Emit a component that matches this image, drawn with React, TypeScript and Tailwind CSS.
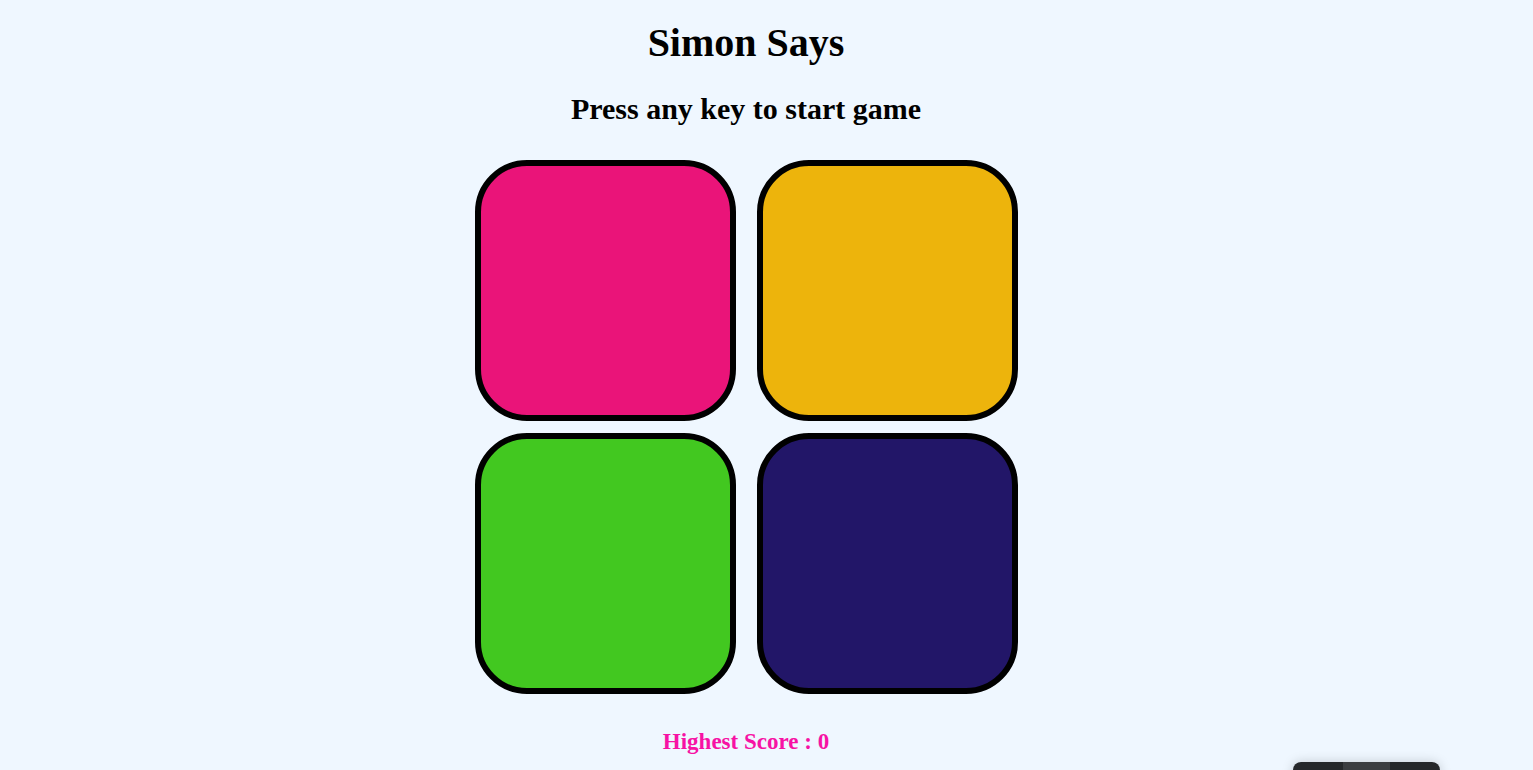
import React from "react";

export default function App() {
  return (
    <div
      className="relative w-[1533px] h-[770px] overflow-hidden bg-[#eff7ff] text-black"
      style={{ fontFamily: '"Liberation Serif", "Times New Roman", serif' }}
    >
      <div className="flex flex-col items-center w-[1492px]">
        <h1 className="mt-[21px] text-[40px] leading-[44px] font-bold">Simon Says</h1>
        <h2 className="mt-[27px] text-[30px] leading-[33px] font-bold">Press any key to start game</h2>
        <div className="mt-[35px] grid grid-cols-[261px_261px] gap-x-[21px] gap-y-[12px]">
          <div className="w-[261px] h-[261px] rounded-[52px] border-[6px] border-black bg-[#ea1479]" />
          <div className="w-[261px] h-[261px] rounded-[52px] border-[6px] border-black bg-[#edb40c]" />
          <div className="w-[261px] h-[261px] rounded-[52px] border-[6px] border-black bg-[#42c820]" />
          <div className="w-[261px] h-[261px] rounded-[52px] border-[6px] border-black bg-[#221668]" />
        </div>
        <h3 className="mt-[35px] text-[23px] leading-[26px] font-bold text-[#f712a4]">Highest Score : 0</h3>
      </div>
      <div className="absolute left-[1293px] top-[762px] w-[147px] h-[30px] rounded-[8px] overflow-hidden flex shadow-[0_0_12px_rgba(0,0,0,0.18)]">
        <div className="w-[50px] bg-[#25272a]" />
        <div className="w-[47px] bg-[#3b3d40]" />
        <div className="w-[50px] bg-[#25272a]" />
      </div>
    </div>
  );
}
